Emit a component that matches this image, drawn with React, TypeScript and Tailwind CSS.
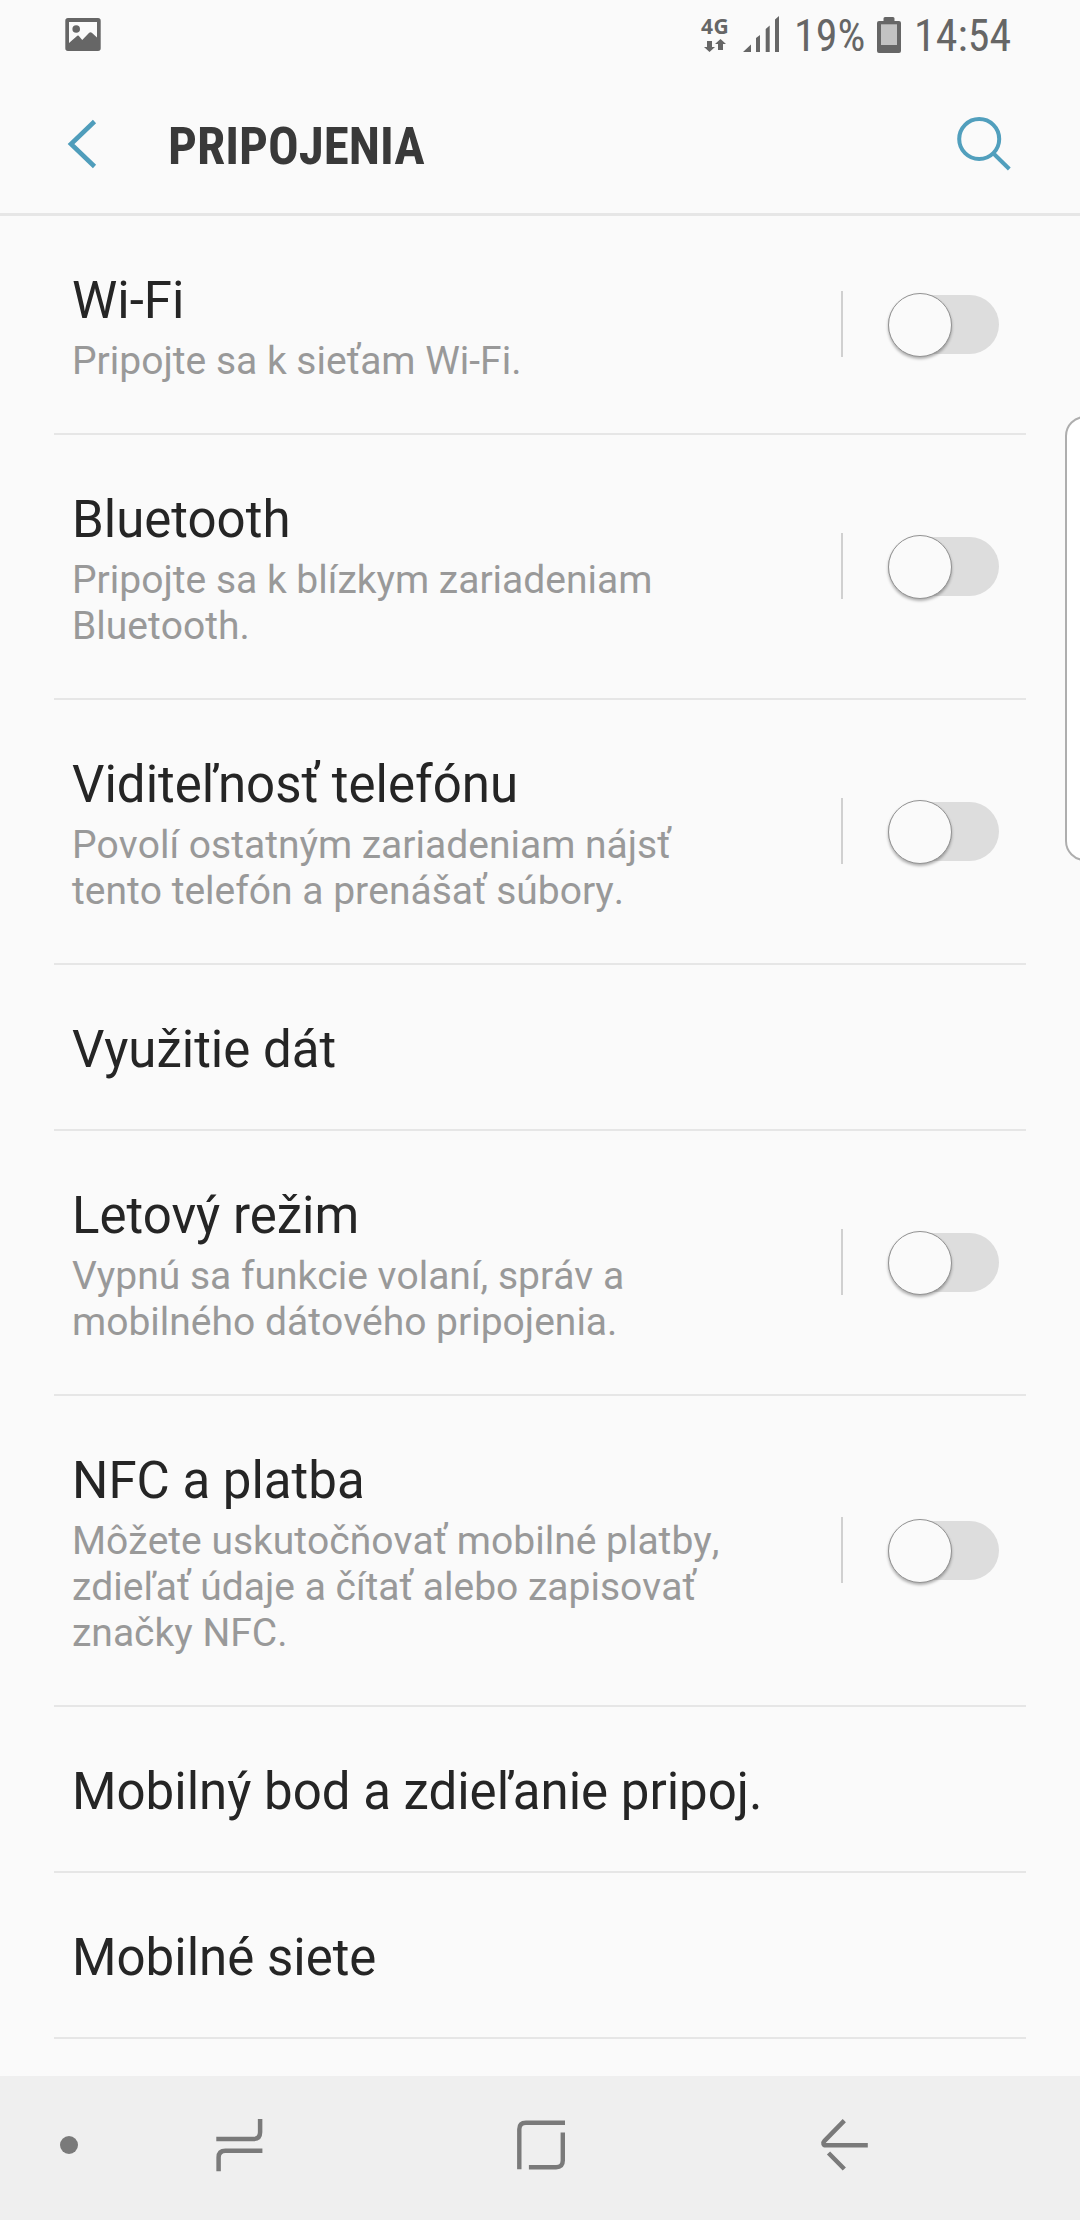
import { useState } from "react";

type Setting = {
  title: string;
  summary?: string;
  hasSwitch?: boolean;
};

const settings: Setting[] = [
  { title: "Wi-Fi", summary: "Pripojte sa k sieťam Wi-Fi.", hasSwitch: true },
  {
    title: "Bluetooth",
    summary: "Pripojte sa k blízkym zariadeniam\nBluetooth.",
    hasSwitch: true,
  },
  {
    title: "Viditeľnosť telefónu",
    summary: "Povolí ostatným zariadeniam nájsť\ntento telefón a prenášať súbory.",
    hasSwitch: true,
  },
  { title: "Využitie dát" },
  {
    title: "Letový režim",
    summary: "Vypnú sa funkcie volaní, správ a\nmobilného dátového pripojenia.",
    hasSwitch: true,
  },
  {
    title: "NFC a platba",
    summary:
      "Môžete uskutočňovať mobilné platby,\nzdieľať údaje a čítať alebo zapisovať\nznačky NFC.",
    hasSwitch: true,
  },
  { title: "Mobilný bod a zdieľanie pripoj." },
  { title: "Mobilné siete" },
];

const StatusBar = () => (
  <div className="flex h-[72px] justify-between pl-[65px] pr-[68px] text-[#666666]">
    <svg className="mt-[18px] h-[34px] w-9" viewBox="0 0 36 34">
      <path
        fill="currentColor"
        fillRule="evenodd"
        d="M3 0h30a2.7 2.7 0 0 1 2.7 2.7v27.6A2.7 2.7 0 0 1 33 33H3a2.7 2.7 0 0 1-2.7-2.7V2.7A2.7 2.7 0 0 1 3 0ZM4 4v21l8.3-7.3q.7-.5 1.4 0L17.2 22l7-7.2q1.3-1.2 2.6 0L32 19.5V4Z"
      />
      <circle cx="11.2" cy="11" r="3.8" fill="currentColor" />
    </svg>
    <div className="flex">
      <div className="w-[30px] pt-[15px]">
        <div className="font-['Noto_Sans'] text-[21px] leading-[22px] font-bold tracking-[0.5px]">
          4G
        </div>
        <svg className="ml-0.5 mt-0.5 h-[13px] w-6" viewBox="0 0 24 13">
          <path
            fill="currentColor"
            d="M4 2h5v6h3l-5.5 5L1 8h3ZM15 11V5h-3l5.5-5L23 5h-3v6Z"
          />
        </svg>
      </div>
      <svg className="ml-3 mt-4 h-9 w-9" viewBox="0 0 36 36">
        <path
          fill="currentColor"
          d="M0 36 8 28.5V36ZM13 36V22l4-3v17ZM22.7 36V13l4-3.500V36ZM32 36V3.500L36 0v36Z"
        />
      </svg>
      <span className="ml-[15px] w-[70px] pt-1.5 font-['Roboto'] text-[44px] leading-[60px] font-stretch-condensed">
        19%
      </span>
      <svg className="ml-[13px] mt-[17px] h-9 w-6" viewBox="0 0 24 36">
        <path
          fill="currentColor"
          d="M8 0h8q1.5 0 1.5 1.5V4H22q2 0 2 2v28q0 2-2 2H2q-2 0-2-2V6q0-2 2-2h4.5V1.5Q6.5 0 8 0Z"
        />
        <path fill="#c2c2c2" d="M4 7.300h16V28H4Z" />
      </svg>
      <span className="ml-[13px] w-[98px] pt-1.5 font-['Roboto'] text-[44px] leading-[60px] font-stretch-condensed">
        14:54
      </span>
    </div>
  </div>
);

const Header = () => (
  <header className="flex h-36 border-b-[3px] border-[#e6e6e6] pl-[66px]">
    <svg
      className="mt-[46px] h-[52px] w-[34px] text-[#4f9dbb]"
      viewBox="0 0 34 52"
      fill="none"
      stroke="currentColor"
      strokeWidth="4.6"
    >
      <path d="M28.5 3.5 5 26l23.5 22.5" />
    </svg>
    <h1 className="ml-[68px] pt-[45px] font-['Roboto'] text-[51px] leading-[60px] font-bold text-[#393939] font-stretch-condensed">
      PRIPOJENIA
    </h1>
    <svg
      className="mt-[43px] mr-[67px] ml-auto h-14 w-14 text-[#519fbd]"
      viewBox="0 0 56 56"
      fill="none"
      stroke="currentColor"
      strokeWidth="4"
    >
      <circle cx="22.2" cy="24" r="20" />
      <path d="m37 39 15.3 15" />
    </svg>
  </header>
);

const Toggle = () => {
  const [on, setOn] = useState(false);

  return (
    <button
      role="switch"
      aria-checked={on}
      onClick={() => setOn(!on)}
      className={`flex h-[59px] w-[111px] items-center rounded-full ${
        on ? "justify-end bg-[#9fcbdc]" : "bg-[#dddddd]"
      }`}
    >
      <span className="h-16 w-16 shrink-0 rounded-full border border-[#929292] bg-[#fafafa] shadow-[0_2px_3px_rgba(0,0,0,0.3)]" />
    </button>
  );
};

const SettingRow = ({ title, summary, hasSwitch }: Setting) => (
  <li className="flex items-center border-b-2 border-[#e6e6e6] pl-[18px]">
    <div className="pt-[55px] pb-[49px]">
      <div className="text-[51px] leading-[60px] whitespace-nowrap text-[#252525]">
        {title}
      </div>
      {summary && (
        <p className="mt-[7px] text-[39px] leading-[46px] whitespace-pre text-[#999999] [font-kerning:none]">
          {summary}
        </p>
      )}
    </div>
    {hasSwitch && (
      <div className="mr-[27px] ml-auto flex items-center gap-[45px]">
        <div className="-mt-0.5 h-[66px] w-0.5 bg-[#d0d0d0]" />
        <Toggle />
      </div>
    )}
  </li>
);

const NavBar = () => (
  <nav className="flex h-36 items-center bg-[#efefef] pl-[60px] text-[#7a7a7a]">
    <div className="-mt-1.5 size-[18px] rounded-full bg-current" />
    <svg
      className="-mt-1.5 ml-[136px] h-[60px] w-[52px]"
      viewBox="214 2115 52 60"
      fill="none"
      stroke="currentColor"
      strokeWidth="4.5"
    >
      <path d="M216.3 2139h37q6.800 0 6.800-6.800V2119M218.6 2171.3v-13.700q0-6.800 6.800-6.800h37" />
    </svg>
    <svg
      className="-mt-1.5 ml-[248px] h-[60px] w-[54px]"
      viewBox="514 2115 54 60"
      fill="none"
      stroke="currentColor"
      strokeWidth="4.4"
    >
      <path d="M519.3 2169.3v-40q0-6.600 6.600-6.600H565M562.8 2132.5v28q0 6.700-6.700 6.700h-27.200" />
    </svg>
    <svg
      className="-mt-1.5 ml-[248px] h-[60px] w-[54px]"
      viewBox="816 2115 54 60"
      fill="none"
      stroke="currentColor"
      strokeWidth="4.5"
    >
      <path d="m844.3 2120.7-19.800 20.100c-2.200 2.300-1 4.500 1.300 4.500h42M828.5 2153l15.800 16" />
    </svg>
  </nav>
);

const App = () => {
  return (
    <div className="relative flex h-[2220px] w-[1080px] flex-col overflow-hidden bg-[#fafafa] font-['Roboto',sans-serif]">
      <StatusBar />
      <Header />
      <ul className="flex-1 px-[54px]">
        {settings.map((item) => (
          <SettingRow key={item.title} {...item} />
        ))}
      </ul>
      <NavBar />

      {/* Edge panel handle, runs off the right side */}
      <div className="absolute top-[416px] left-[1065px] h-[445px] w-10 rounded-[20px] border-2 border-[#aeaeae] bg-white" />
    </div>
  );
};

export default App;
